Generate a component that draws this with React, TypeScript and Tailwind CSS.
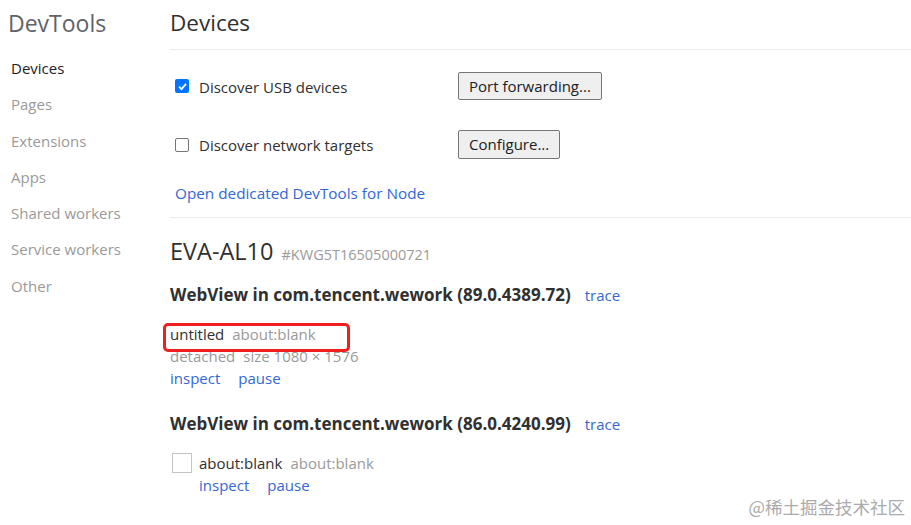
const sideItems = ["Devices", "Pages", "Extensions", "Apps", "Shared workers", "Service workers", "Other"];

function Checkbox({ checked }: { checked?: boolean }) {
  if (checked) {
    return (
      <span className="flex h-[14px] w-[14px] items-center justify-center rounded-[2px] bg-[#0075ff]">
        <svg width="11" height="11" viewBox="0 0 12 12">
          <path d="M2.2 6.2 L4.9 8.9 L9.9 3.2" fill="none" stroke="#fff" strokeWidth="2" />
        </svg>
      </span>
    );
  }
  return <span className="block h-[14px] w-[14px] rounded-[2px] border border-[#767676] bg-white" />;
}

function Target({
  title,
  url,
  detail,
  thumb,
}: {
  title: string;
  url: string;
  detail?: string[];
  thumb?: boolean;
}) {
  return (
    <div className="flex">
      {thumb && <div className="mt-[1px] mr-[7px] ml-[2px] h-[20px] w-[20px] border border-[#c4c4c4]" />}
      <div className="flex flex-col">
        <div className="relative h-[22px] leading-[22px]">
          <span className="text-[#303030]">{title}</span>
          <span className="ml-[8px] text-[#9a9a9a]">{url}</span>
          {!thumb && (
            <div className="absolute top-[0px] left-[-7px] h-[29px] w-[187px] rounded-[5px] border-[3px] border-[#f01e1e]" />
          )}
        </div>
        {detail && (
          <div className="h-[22px] leading-[22px] text-[#9a9a9a]">
            <span>{detail[0]}</span>
            <span className="ml-[8px]">{detail[1]}</span>
          </div>
        )}
        <div className="flex h-[23px] gap-[18px] leading-[23px] text-[#3367d6]">
          <span>inspect</span>
          <span>pause</span>
        </div>
      </div>
    </div>
  );
}

export default function App() {
  return (
    <div
      className="relative flex h-[525px] w-[911px] overflow-hidden bg-white text-[15px] text-[#303030]"
      style={{ fontFamily: '"Open Sans", "Noto Sans", sans-serif' }}
    >
      {/* sidebar */}
      <div className="w-[170px] shrink-0">
        <div className="mt-[6px] pl-[8px] text-[23px] leading-[34px] text-[#5f6368]">DevTools</div>
        <div className="mt-[10px] flex flex-col">
          {sideItems.map((item, i) => (
            <div
              key={item}
              className={`h-[36.3px] pl-[11px] leading-[36px] ${i === 0 ? "text-[#202124]" : "text-[#9a9a9a]"}`}
            >
              {item}
            </div>
          ))}
        </div>
      </div>

      {/* main */}
      <div className="flex flex-1 flex-col">
        <div className="mt-[6px] text-[22.5px] leading-[34px] text-[#303030]">Devices</div>
        <div className="mt-[9px] h-px bg-[#ebebeb]" />

        <div className="mt-[22px] flex h-[28px] items-center pl-[5px]">
          <Checkbox checked />
          <span className="ml-[10px] w-[259px] translate-y-[1px]">Discover USB devices</span>
          <button className="h-[28px] rounded-[2px] border border-[#767676] bg-[#efefef] px-[10px] text-[15px] text-[#202124]">
            Port forwarding...
          </button>
        </div>

        <div className="mt-[30px] flex h-[29px] items-center pl-[5px]">
          <Checkbox />
          <span className="ml-[10px] w-[259px] translate-y-[1px]">Discover network targets</span>
          <button className="h-[29px] rounded-[2px] border border-[#767676] bg-[#efefef] px-[10px] text-[15px] text-[#202124]">
            Configure...
          </button>
        </div>

        <div className="mt-[23px] pl-[5px] text-[15.3px] leading-[22px] text-[#3367d6]">
          Open dedicated DevTools for Node
        </div>
        <div className="mt-[13px] h-px bg-[#ebebeb]" />

        <div className="mt-[17px] flex items-baseline">
          <span className="text-[23.5px] leading-[32px] text-[#303030]">EVA-AL10</span>
          <span className="ml-[8px] text-[14.5px] text-[#9a9a9a]">#KWG5T16505000721</span>
        </div>

        <div className="mt-[16px] flex items-baseline">
          <span className="text-[17px] font-bold leading-[24px] text-[#303030]">
            WebView in com.tencent.wework (89.0.4389.72)
          </span>
          <span className="ml-[14px] text-[#3367d6]">trace</span>
        </div>

        <div className="mt-[16px]">
          <Target title="untitled" url="about:blank" detail={["detached", "size 1080 × 1576"]} />
        </div>

        <div className="mt-[22px] flex items-baseline">
          <span className="text-[17px] font-bold leading-[24px] text-[#303030]">
            WebView in com.tencent.wework (86.0.4240.99)
          </span>
          <span className="ml-[14px] text-[#3367d6]">trace</span>
        </div>

        <div className="mt-[16px]">
          <Target title="about:blank" url="about:blank" thumb />
        </div>
      </div>

      <div
        className="absolute right-[6px] bottom-[5px] text-[17.5px] text-[#ababab]"
        style={{ fontFamily: '"Noto Sans CJK SC", sans-serif' }}
      >
        @稀土掘金技术社区
      </div>
    </div>
  );
}
